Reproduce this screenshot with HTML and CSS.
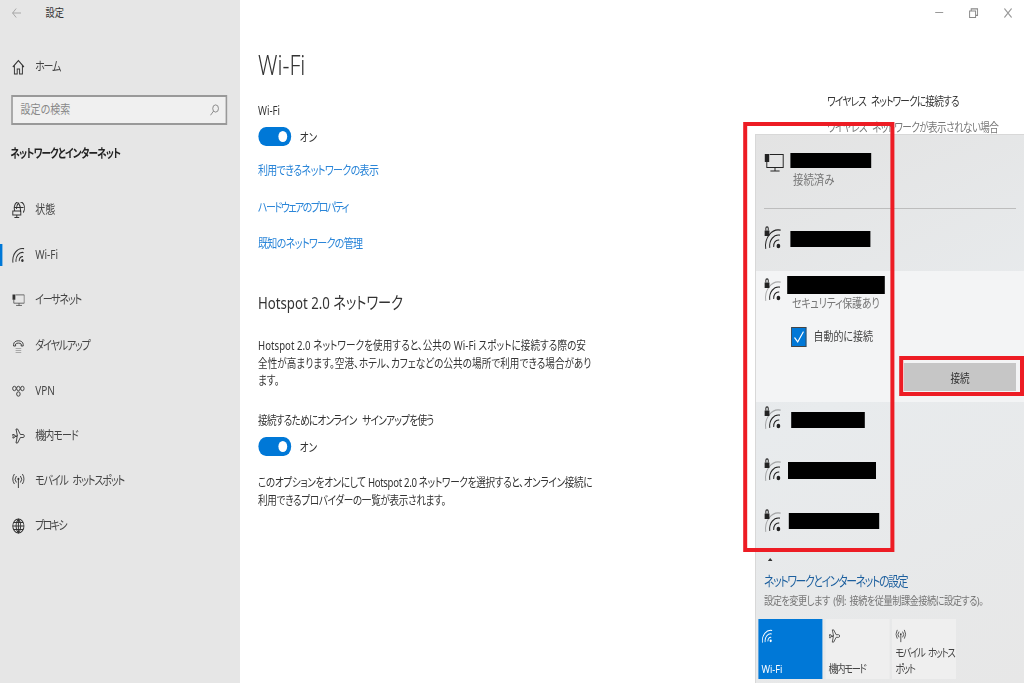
FILE: index.html
```html
<!DOCTYPE html>
<html lang="ja">
<head>
<meta charset="utf-8">
<title>設定</title>
<link rel="stylesheet" href="styles.css">
</head>
<body>
<svg class="defs" width="0" height="0" aria-hidden="true">
  <symbol id="i-wifi" viewBox="0 0 23 25">
    <path class="lock-body" d="M.8 5.500h6v5.500h-6z"/>
    <path class="arc" d="M2.300 5.500V3.300a1.500 1.500 0 0 1 3 0v2.200"/>
    <path class="arc" d="M12.100 22A6 6 0 0 1 19 15.100M7.200 22.900A11 11 0 0 1 19.900 10.200M2.200 23.800A16 16 0 0 1 20.800 5.200"/>
    <circle cx="18" cy="21" r="2.300"/>
  </symbol>
  <symbol id="i-wifi-weak" viewBox="0 0 23 25">
    <path class="lock-body" d="M.8 5.500h6v5.500h-6z"/>
    <path class="arc" d="M2.300 5.500V3.300a1.500 1.500 0 0 1 3 0v2.200"/>
    <path class="arc" d="M12.100 22A6 6 0 0 1 19 15.100M7.200 22.900A11 11 0 0 1 19.900 10.200"/>
    <path class="arc faint" d="M2.200 23.800A16 16 0 0 1 20.800 5.200"/>
    <circle cx="18" cy="21" r="2.300"/>
  </symbol>
  <symbol id="i-ether" viewBox="0 0 25 19">
    <path class="arc" d="M7 1.500h17v13H3.500V9M13.750 14.500V18M8 18h11.500"/>
    <path class="lock-body" d="M1 1h5.500v8H1z"/>
  </symbol>
  <symbol id="i-wifi-s" viewBox="0 0 16 16">
    <path class="arc" d="M9.100 14.200A4 4 0 0 1 13.700 9.600M5.100 14.900A8 8 0 0 1 14.400 5.600M1.200 15.600A12 12 0 0 1 15.100 1.700"/>
    <circle cx="13" cy="13.500" r="1.500"/>
  </symbol>
  <symbol id="i-home" viewBox="0 0 16 16">
    <path class="arc" d="M1 8l7-6.500L15 8M3 6.500V15h3.500v-5h3v5H13V6.500"/>
  </symbol>
  <symbol id="i-status" viewBox="0 0 16 16">
    <path class="arc" d="M3.500 9A6.500 6.500 0 1 1 14 10.500M8 1c-2 2-2.500 4-2.500 6M8 1c2 2 3 5 2.500 9M2.500 5.500h12M1 9h10v4H1zM6 13v2.500M3 15.500h6"/>
  </symbol>
  <symbol id="i-dial" viewBox="0 0 16 16">
    <path class="arc thin" d="M2 6.500C2 1.500 14 1.500 14 6.500V8h-2.500V6c-1-1.200-6-1.200-7 0v2H2z"/>
    <path class="arc faint" d="M4.500 10.500h7M4.500 12.500h7M4.500 14.500h7"/>
  </symbol>
  <symbol id="i-vpn" viewBox="0 0 16 16">
    <circle class="arc thin" cx="3" cy="5.500" r="2.200"/><circle class="arc thin" cx="13" cy="5.500" r="2.200"/><circle class="arc thin" cx="8" cy="5.500" r="2.200"/><circle class="arc thin" cx="8" cy="11" r="2.200"/>
  </symbol>
  <symbol id="i-plane" viewBox="0 0 16 16">
    <path class="arc thin" d="M.8 6.500h2l1 1.500h3L5 1h2l3.500 5.500H14c2 0 2 3 0 3h-3.500L7 15H5l1.500-6.500h-3l-1 1.500H1l.5-1.500z"/>
  </symbol>
  <symbol id="i-antenna" viewBox="0 0 16 16">
    <circle cx="8" cy="6" r="1.200"/>
    <path class="arc thin" d="M8 7v8M5.500 3a4.500 4.500 0 0 0 0 6.500M10.500 3a4.500 4.500 0 0 1 0 6.500M3 1a8 8 0 0 0 0 10M13 1a8 8 0 0 1 0 10"/>
  </symbol>
  <symbol id="i-globe" viewBox="0 0 16 16">
    <circle class="arc" cx="8" cy="8" r="7"/>
    <path class="arc" d="M8 1v14M1 8h14M2.200 4.500h11.600M2.200 11.500h11.600M8 1c-4 4-4 10 0 14M8 1c4 4 4 10 0 14"/>
  </symbol>
  <symbol id="i-search" viewBox="0 0 16 16">
    <circle class="arc" cx="10" cy="6" r="4.800"/><path class="arc" d="M6.500 9.500L1.500 15"/>
  </symbol>
  <symbol id="i-back" viewBox="0 0 16 16">
    <path class="arc" d="M1 8h14M7 2L1 8l6 6"/>
  </symbol>
  <symbol id="i-restore" viewBox="0 0 12 10">
    <path class="arc" d="M1 3h7.500v6.500H1zM3 3V.8h8v6.500H8.500"/>
  </symbol>
  <symbol id="i-close" viewBox="0 0 10 10">
    <path class="arc" d="M.5.5l9 9M9.500.5l-9 9"/>
  </symbol>
</svg>

<div class="page">
  <aside class="sidebar">
    <div class="titlebar">
      <svg class="back"><use href="#i-back"/></svg>
      <span class="app-title">設定</span>
    </div>
    <a class="nav-row home kana"><svg class="nav-icon"><use href="#i-home"/></svg>ホーム</a>
    <div class="search">
      <span>設定の検索</span>
      <svg class="search-icon"><use href="#i-search"/></svg>
    </div>
    <div class="side-heading">ネットワークとインターネット</div>
    <nav class="nav">
      <a class="nav-row"><svg class="nav-icon"><use href="#i-status"/></svg>状態</a>
      <a class="nav-row active"><svg class="nav-icon"><use href="#i-wifi-s"/></svg>Wi-Fi</a>
      <a class="nav-row kana"><svg class="nav-icon ether"><use href="#i-ether"/></svg>イーサネット</a>
      <a class="nav-row kana"><svg class="nav-icon"><use href="#i-dial"/></svg>ダイヤルアップ</a>
      <a class="nav-row"><svg class="nav-icon"><use href="#i-vpn"/></svg>VPN</a>
      <a class="nav-row mixed"><svg class="nav-icon"><use href="#i-plane"/></svg>機内モード</a>
      <a class="nav-row mobile"><svg class="nav-icon"><use href="#i-antenna"/></svg>モバイル ホットスポット</a>
      <a class="nav-row kana tight"><svg class="nav-icon"><use href="#i-globe"/></svg>プロキシ</a>
    </nav>
  </aside>

  <main class="content">
    <h1>Wi-Fi</h1>
    <div class="label first">Wi-Fi</div>
    <div class="toggle-row"><span class="toggle"><i></i></span><span class="toggle-text">オン</span></div>
    <a class="link l1">利用できるネットワークの表示</a>
    <a class="link l2">ハードウェアのプロパティ</a>
    <a class="link l3">既知のネットワークの管理</a>
    <h2>Hotspot 2.0 ネットワーク</h2>
    <p class="para p1">Hotspot 2.0 ネットワークを使用すると、公共の Wi-Fi スポットに接続する際の安<br>全性が高まります。空港、ホテル、カフェなどの公共の場所で利用できる場合があり<br>ます。</p>
    <div class="label second">接続するためにオンライン サインアップを使う</div>
    <div class="toggle-row"><span class="toggle"><i></i></span><span class="toggle-text">オン</span></div>
    <p class="para p2">このオプションをオンにして Hotspot 2.0 ネットワークを選択すると、オンライン接続に<br>利用できるプロバイダーの一覧が表示されます。</p>
  </main>

  <section class="related">
    <div class="win-controls">
      <span class="win-min"></span>
      <svg class="win-restore"><use href="#i-restore"/></svg>
      <svg class="win-close"><use href="#i-close"/></svg>
    </div>
    <div class="related-title">ワイヤレス ネットワークに接続する</div>
    <div class="related-sub">ワイヤレス ネットワークが表示されない場合</div>
  </section>

  <section class="flyout">
    <div class="net-row row-connected">
      <svg class="net-icon ether-lg"><use href="#i-ether"/></svg>
      <div>
        <div class="mask m1"></div>
        <div class="net-status connected">接続済み</div>
      </div>
    </div>
    <div class="divider"></div>
    <div class="net-row row-2">
      <svg class="net-icon"><use href="#i-wifi"/></svg>
      <div class="mask m2"></div>
    </div>
    <div class="net-row row-open">
      <svg class="net-icon"><use href="#i-wifi-weak"/></svg>
      <div>
        <div class="mask m3"></div>
        <div class="net-status secure">セキュリティ保護あり</div>
        <label class="auto"><span class="check"><svg viewBox="0 0 19 20"><path d="M3.500 10.500l4.500 5L16 4"/></svg></span>自動的に接続</label>
      </div>
      <button class="connect">接続</button>
    </div>
    <div class="net-row row-4">
      <svg class="net-icon"><use href="#i-wifi-weak"/></svg>
      <div class="mask m4"></div>
    </div>
    <div class="net-row row-5">
      <svg class="net-icon"><use href="#i-wifi-weak"/></svg>
      <div class="mask m5"></div>
    </div>
    <div class="net-row row-6">
      <svg class="net-icon"><use href="#i-wifi-weak"/></svg>
      <div class="mask m6"></div>
    </div>
    <div class="flyout-foot">
      <div class="caret"></div>
      <a class="foot-link">ネットワークとインターネットの設定</a>
      <div class="foot-sub">設定を変更します (例: 接続を従量制課金接続に設定する)。</div>
      <div class="tiles">
        <div class="tile on"><svg><use href="#i-wifi-s"/></svg><span>Wi-Fi</span></div>
        <div class="tile"><svg><use href="#i-plane"/></svg><span class="tile-jp">機内モード</span></div>
        <div class="tile"><svg><use href="#i-antenna"/></svg><span class="tile-jp">モバイル ホットス<br>ポット</span></div>
      </div>
    </div>
  </section>

  <div class="frame frame-list"></div>
  <div class="frame frame-btn"></div>
</div>
</body>
</html>
```

FILE: styles.css
```css
* { box-sizing: border-box; }
html, body { margin: 0; height: 100%; overflow: hidden; background: #fff; }
.defs { position: absolute; }

.page {
  position: relative;
  display: flex;
  width: 1280px;
  height: 683px;
  overflow: hidden;
  transform: scaleX(.8);
  transform-origin: 0 0;
  filter: blur(.45px);
  font-family: "Noto Sans", "Noto Sans CJK JP", sans-serif;
  font-size: 12px;
  font-feature-settings: "palt";
  color: #333;
  line-height: 18px;
}

svg { display: block; fill: currentColor; }
.arc { fill: none; stroke: currentColor; stroke-width: 1.200; }
.thin { stroke-width: 1; }
.lock-body { fill: currentColor; }
.faint { opacity: .35; }

/* sidebar */
.sidebar { flex: 0 0 300px; height: 683px; background: #e6e6e6; }
.titlebar { display: flex; align-items: center; height: 26px; padding-left: 15px; }
.back { width: 12px; height: 12px; color: #999; }
.app-title { margin-left: 30px; font-size: 11.500px; }
.nav-row { position: relative; display: flex; align-items: center; height: 45.200px; padding-left: 15px; font-size: 12.500px; color: #444; white-space: pre; }
.kana { letter-spacing: -1.500px; }
.tight { letter-spacing: -2.200px; }
.mixed { letter-spacing: -1.100px; }
.mobile { letter-spacing: -1.400px; word-spacing: 4px; }
.nav-icon { flex: none; width: 16px; height: 16px; margin-right: 13px; color: #333; }
.home { margin-top: 18.400px; }
.active::before { content: ""; position: absolute; left: 0; top: 11.500px; width: 3px; height: 22px; background: #0078d7; }
.search { display: flex; align-items: center; justify-content: space-between; width: 270px; height: 30px; margin: 5.400px 0 0 13.750px; padding: 0 8px 0 10px; background: #f0f0f0; border: 2px solid #999; color: #888; font-size: 12.500px; }
.search-icon { width: 12px; height: 12px; color: #777; }
.side-heading { margin: 20px 0 0 13px; font-weight: 700; font-size: 12px; letter-spacing: -1.050px; color: #222; white-space: nowrap; }
.nav { margin-top: 24.400px; }

/* content */
.content { flex: 0 0 733px; padding-left: 22.500px; }
h1 { margin: 50px 0 0; height: 30px; font-size: 27px; line-height: 30px; font-weight: 300; color: #333; }
.label.first { margin-top: 22px; }
.label.second { margin-top: 22px; letter-spacing: -.9px; word-spacing: 5px; }
.toggle-row { display: flex; align-items: center; gap: 11px; height: 19px; margin-top: 7px; }
.toggle { display: flex; align-items: center; justify-content: flex-end; width: 41px; height: 19px; padding-right: 5px; border-radius: 10px; background: #0078d7; }
.toggle i { width: 11px; height: 11px; border-radius: 50%; background: #fff; }
.toggle-text { padding-top: 2px; }
.link { display: block; color: #2a85d8; font-size: 12.500px; white-space: nowrap; }
.l1 { margin-top: 16px; letter-spacing: -.8px; }
.l2 { margin-top: 19px; letter-spacing: -1.900px; }
.l3 { margin-top: 18px; letter-spacing: -.8px; }
h2 { margin: 38px 0 0; height: 24px; font-size: 16.500px; line-height: 24px; font-weight: 400; color: #333; }
.para { margin: 0; line-height: 17.700px; color: #333; white-space: nowrap; }
.p1 { margin-top: 22px; letter-spacing: .05px; }
.p2 { margin-top: 18px; letter-spacing: -.4px; }

/* related links */
.related { flex: 1; padding-left: 1px; }
.win-controls { position: relative; height: 26px; }
.win-min { position: absolute; left: 135px; top: 12px; width: 10px; height: 1px; background: #999; }
.win-restore { position: absolute; left: 177px; top: 8px; width: 12px; height: 10px; color: #888; }
.win-close { position: absolute; left: 221px; top: 8px; width: 10px; height: 10px; color: #999; }
.related-title { margin-top: 67px; letter-spacing: -1px; word-spacing: 4px; white-space: nowrap; }
.related-sub { margin-top: 8px; letter-spacing: -.75px; word-spacing: 4px; color: #777; white-space: nowrap; }

/* flyout */
.flyout {
  position: absolute;
  left: 943.750px;
  top: 134px;
  width: 336.250px;
  height: 549px;
  background: linear-gradient(160deg, #e3e3e3 0%, #e8ebed 45%, #e7e7e7 100%);
  border-left: 1px solid #cfcfcf;
  border-top: 1px solid #d8d8d8;
}
.net-row { display: flex; align-items: flex-start; padding-left: 10.250px; color: #222; }
.net-icon { flex: none; width: 23px; height: 25px; margin-right: 5.750px; }
.ether-lg { width: 25px; height: 19px; margin-right: 3.750px; }
.mask { height: 16px; background: #000; }
.row-connected { height: 73px; padding-top: 18px; }
.m1 { width: 101px; height: 15px; margin-left: 3.750px; }
.net-status { color: #777; white-space: nowrap; }
.connected { margin: 2px 0 0 7.500px; font-size: 13px; }
.divider { height: 1px; margin: 0 10px 0 10.250px; background: #bdbdbd; }
.row-2 { height: 62px; padding-top: 16px; }
.m2 { width: 100px; margin: 6px 0 0 3.750px; }
.row-open { position: relative; height: 131px; padding-top: 5px; background: #f3f4f5; }
.row-open .net-icon { margin-top: 1px; }
.m3 { width: 122.500px; height: 18px; }
.secure { margin: 1px 0 0 6.250px; font-size: 12.500px; letter-spacing: -.3px; }
.auto { display: flex; align-items: center; gap: 9px; margin: 14px 0 0 5px; height: 20px; font-size: 12.500px; color: #444; white-space: nowrap; }
.check { width: 19px; height: 20px; background: #0078d7; border: 1px solid #444; }
.check svg { width: 100%; height: 100%; fill: none; stroke: #fff; stroke-width: 1.500; }
.connect { align-self: flex-end; margin: 0 10px 11px auto; width: 140px; height: 28px; padding: 3px 0 0; border: 0; background: #c6c6c6; font: inherit; color: #333; }
.row-4 { height: 52px; padding-top: 3px; }
.m4 { width: 92.500px; margin: 7px 0 0 5px; }
.row-5 { height: 51px; padding-top: 3px; }
.m5 { width: 110px; height: 17px; margin: 5px 0 0 1.250px; }
.row-6 { height: 51px; padding-top: 3px; }
.m6 { width: 112.500px; margin: 5px 0 0 2.500px; }

.flyout-foot { padding-left: 3px; }
.caret { width: 6px; height: 3px; margin: 2px 0 0 12px; background: #333; clip-path: polygon(50% 0, 100% 100%, 0 100%); }
.foot-link { display: block; margin: 11px 0 0 7.250px; height: 18px; font-size: 13.500px; letter-spacing: -1.600px; color: #1c5f9e; white-space: nowrap; }
.foot-sub { margin: 3px 0 0 7.250px; height: 16px; line-height: 16px; font-size: 11.500px; letter-spacing: -.65px; word-spacing: 2px; color: #777; white-space: nowrap; }
.tiles { display: flex; gap: 3.750px; margin-top: 10px; }
.tile { display: flex; flex-direction: column; justify-content: space-between; width: 80px; height: 60px; padding: 10px 4px 2px; background: #efefef; color: #444; font-size: 11.500px; line-height: 16px; white-space: nowrap; }
.tile svg { width: 14px; height: 14px; color: #333; }
.tile-jp { letter-spacing: -1.600px; word-spacing: 3px; }
.tile.on { background: #0078d7; color: #fff; }
.tile.on svg { color: #fff; }

/* red annotation frames */
.frame { position: absolute; border-style: solid; border-color: #ed1c24; }
.frame-list { left: 928.750px; top: 122px; width: 188.750px; height: 430px; border-width: 4px 5.500px; }
.frame-btn { left: 1124px; top: 355.500px; width: 156px; height: 40.500px; border-width: 4px 5px; }
```
